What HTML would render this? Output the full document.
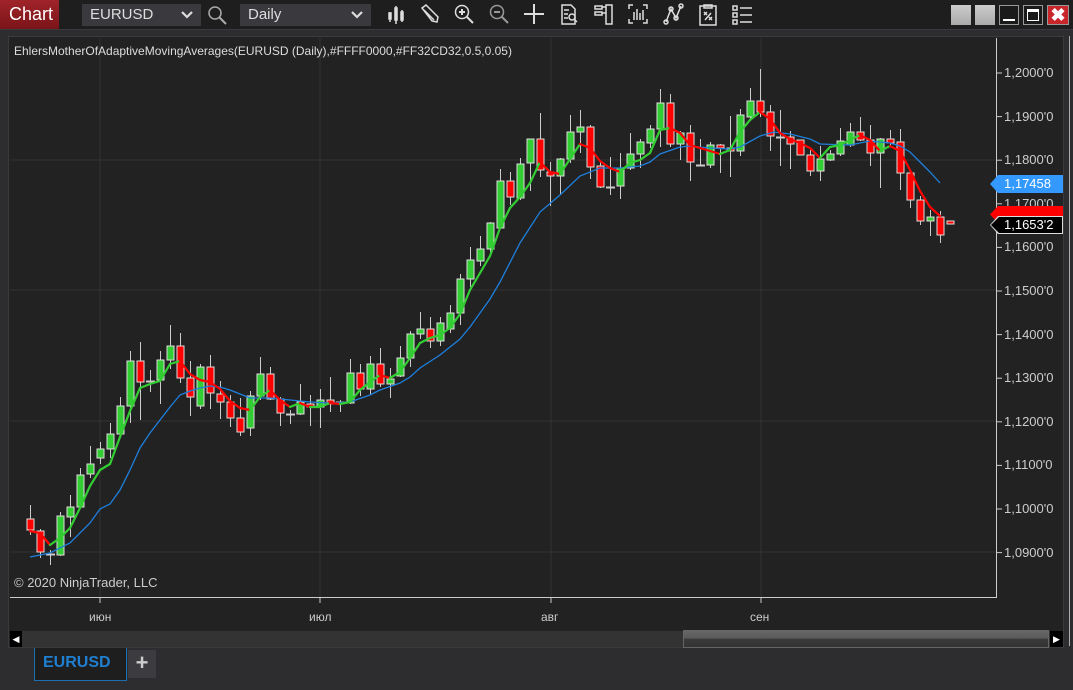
<!DOCTYPE html>
<html><head><meta charset="utf-8">
<style>
*{margin:0;padding:0;box-sizing:border-box}
body{width:1073px;height:690px;background:#2d2d30;font-family:"Liberation Sans",sans-serif;position:relative;overflow:hidden}
.tb{position:absolute;left:0;top:0;width:1073px;height:30px;background:#1e1e1e;border-bottom:1px solid #3a3a3e}
.ct{position:absolute;left:0;top:0;width:59px;height:29px;background:linear-gradient(#a0242a,#7a1418);color:#fff;font-size:18px;line-height:29px;padding-left:9px}
.dd{position:absolute;top:4px;height:22px;background:#3a3a3e;color:#ddd;font-size:15px;line-height:22px;padding-left:8px}
.dd svg{position:absolute;right:8px;top:7px}
.wb{position:absolute;top:5px;width:20px;height:20px}
.lab{position:absolute;color:#ccc;font-size:12px}
</style></head><body>
<div class="tb">
<div class="ct">Chart</div>
<div class="dd" style="left:82px;width:119px">EURUSD<svg width="12" height="8"><path d="M1 1l5 5 5-5" stroke="#ddd" stroke-width="2.2" fill="none"/></svg></div>
<svg style="position:absolute;left:206px;top:4px" width="24" height="22"><circle cx="9" cy="9" r="6" stroke="#aaa" stroke-width="1.5" fill="none"/><path d="M13 13l7 7" stroke="#aaa" stroke-width="2"/></svg>
<div class="dd" style="left:240px;width:131px">Daily<svg width="12" height="8"><path d="M1 1l5 5 5-5" stroke="#ddd" stroke-width="2.2" fill="none"/></svg></div>
<svg style="position:absolute;left:380px;top:0" width="600" height="30" fill="none" stroke="#ddd" stroke-width="1.5">
<g transform="translate(8,4)"><path d="M2 8v10M1 9h2v6H1z M8 2v18M7 4h2v12H7z M14 6v12M13 8h2v8h-2z"/></g>
<g transform="translate(40,4)"><path d="M2 4l4-3 12 12-1 5-5-1z M4 6l10 10"/></g>
<g transform="translate(73,3)"><circle cx="9" cy="9" r="6.5"/><path d="M6 9h6M9 6v6M14 14l6 6" stroke-width="2"/></g>
<g transform="translate(108,3)" stroke="#999"><circle cx="9" cy="9" r="6.5"/><path d="M6 9h6M14 14l6 6" stroke-width="2"/></g>
<g transform="translate(144,4)"><path d="M10 0v20M0 10h20" stroke-width="2"/></g>
<g transform="translate(180,4)"><path d="M2 1h9l4 4v15H2z M4 6h5M4 10h4M4 14h4"/><circle cx="12" cy="13" r="3"/><path d="M14 15l3 3"/></g>
<g transform="translate(214,4)"><path d="M1 2h7v3H1z M1 8h7v3H1z M8 3h4 M8 9h4 M12 1h6v19h-6z"/></g>
<g transform="translate(248,4)"><path d="M1 5V1h4 M15 1h4v4 M1 15v4h4 M15 19h4v-4 M6 8v8M9 5v11M12 9v7M15 6v10"/></g>
<g transform="translate(284,4)"><path d="M2 18l5-13 5 9 5-12"/><circle cx="2" cy="18" r="2"/><circle cx="7" cy="5" r="2"/><circle cx="12" cy="14" r="2"/><circle cx="17" cy="2" r="2"/></g>
<g transform="translate(318,4)"><path d="M2 2h16v19H2z M6 1h8v3H6z M6 8l3 3M9 8l-3 3 M11 13l3 3M14 13l-3 3 M7 16l6-7"/></g>
<g transform="translate(352,5)"><path d="M1 1h4v4H1z M1 8h4v4H1z M1 15h4v4H1z M8 3h12M8 10h12M8 17h12"/></g>
</svg>
<div class="wb" style="left:951px;background:linear-gradient(#ccc,#aaa)"></div>
<div class="wb" style="left:975px;background:linear-gradient(#ccc,#aaa)"></div>
<div class="wb" style="left:999px;background:#1a1a1a;border:1px solid #999"><div style="position:absolute;left:3px;top:13px;width:12px;height:2px;background:#fff"></div></div>
<div class="wb" style="left:1023px;background:#1a1a1a;border:1px solid #999"><div style="position:absolute;left:3px;top:3px;width:12px;height:12px;border:1.5px solid #fff;border-top-width:3px"></div></div>
<div class="wb" style="left:1047px;width:22px;background:#c8262a;border:1px solid #999;color:#fff;font-weight:bold;font-size:18px;line-height:18px;text-align:center">✖</div>
</div>
<div style="position:absolute;left:8px;top:36px;width:1056px;height:612px;background:#222;border:1px solid #3a3a3e"></div>
<div style="position:absolute;left:1069px;top:36px;width:1px;height:610px;background:#aaa"></div>
<svg id="ch" style="position:absolute;left:0;top:0" width="1073" height="690"></svg>
<div class="lab" style="left:14px;top:44px;color:#ddd">EhlersMotherOfAdaptiveMovingAverages(EURUSD (Daily),#FFFF0000,#FF32CD32,0.5,0.05)</div>
<div class="lab" style="left:14px;top:575px;color:#ccc;font-size:13px">© 2020 NinjaTrader, LLC</div>
<div class="lab" style="left:89px;top:610px">июн</div>
<div class="lab" style="left:309px;top:610px">июл</div>
<div class="lab" style="left:541px;top:610px">авг</div>
<div class="lab" style="left:750px;top:610px">сен</div>
<div id="pl"></div>
<div style="position:absolute;left:990px;top:206px;width:73px;height:17px;background:#f00;clip-path:polygon(0 50%,8px 0,100% 0,100% 100%,8px 100%)"></div>
<div style="position:absolute;left:990px;top:175px;width:73px;height:18px;background:#3399ff;clip-path:polygon(0 50%,8px 0,100% 0,100% 100%,8px 100%);color:#fff;font-size:13px;line-height:18px;padding-left:14px">1,17458</div>
<div style="position:absolute;left:990px;top:216px;width:73px;height:18px;background:#ddd;clip-path:polygon(0 50%,8px 0,100% 0,100% 100%,8px 100%)"><div style="position:absolute;left:1px;top:1px;width:71px;height:16px;background:#000;clip-path:polygon(0 50%,8px 0,100% 0,100% 100%,8px 100%);color:#fff;font-size:13px;line-height:16px;padding-left:13px">1,1653'2</div></div>
<div style="position:absolute;left:10px;top:631px;width:1053px;height:16px;background:#333"></div>
<div style="position:absolute;left:10px;top:631px;width:12px;height:16px;background:#000;color:#fff;font-size:9px;line-height:16px;text-align:center">◀</div>
<div style="position:absolute;left:683px;top:630px;width:366px;height:18px;background:linear-gradient(#666 0,#5a5a5a 45%,#3a3a3a 50%,#333 100%);border:1px solid #666"></div>
<div style="position:absolute;left:1050px;top:631px;width:13px;height:16px;background:#000;color:#fff;font-size:9px;line-height:16px;text-align:center">▶</div>
<div style="position:absolute;left:34px;top:648px;width:93px;height:33px;background:#1e1e1e;border:1px solid #1a6fb5;border-top:none;color:#1f7fd0;font-weight:bold;font-size:16px;line-height:30px;padding-left:8px">EURUSD</div>
<div style="position:absolute;left:128px;top:650px;width:28px;height:28px;background:#3c3c40;color:#ccc;font-weight:bold;font-size:22px;line-height:26px;text-align:center">+</div>
<script>
var s='';
// grid
[160,290,421,552].forEach(function(y){s+='<line x1="10" x2="996" y1="'+y+'" y2="'+y+'" stroke="#333" stroke-width="1"/>';});
[100,320,551,761].forEach(function(x){s+='<line x1="'+x+'" x2="'+x+'" y1="38" y2="597" stroke="#333"/><line x1="'+x+'" x2="'+x+'" y1="597" y2="603" stroke="#ccc"/>';});
s+='<line x1="996.5" x2="996.5" y1="38" y2="598" stroke="#ccc"/><line x1="10" x2="997" y1="597.5" y2="597.5" stroke="#ccc"/>';
var pl='';
for(var i=0;i<12;i++){var p=1.2-i*0.01;var y=73+i*43.6;s+='<line x1="997" x2="1002" y1="'+y+'" y2="'+y+'" stroke="#ccc"/>';
pl+='<div class="lab" style="left:1004px;top:'+(y-8)+'px;font-size:13px">'+p.toFixed(4).replace('.',',')+"'0</div>";}
document.getElementById('pl').innerHTML=pl;
// candles: [o,c,h,l] in y px; color G/R
var C=[['R',519,530,505,535],['R',531,552,529,558],['D',554,554,550,565],['G',555,516,512,556],['G',517,507,495,537],['G',507,475,468,508],['G',474,464,446,478],['G',458,449,442,464],['G',449,434,423,458],['G',434,406,397,435],['G',406,361,351,423],['R',361,382,342,420],['D',381,381,370,392],['G',380,360,351,404],['G',360,346,325,369],['R',346,378,333,383],['R',378,397,361,416],['G',406,367,364,409],['R',367,393,355,409],['R',394,402,381,419],['R',402,418,395,427],['R',418,432,398,436],['G',428,396,391,436],['G',396,374,357,400],['R',374,399,367,400],['R',399,413,397,426],['D',414,414,410,424],['G',414,402,384,415],['R',404,407,395,426],['G',407,400,389,428],['R',400,404,377,412],['D',402,402,400,412],['G',403,373,359,404],['R',373,389,364,396],['G',389,364,356,395],['R',364,384,348,387],['G',384,379,368,398],['G',376,358,346,377],['G',358,334,331,367],['G',334,329,312,339],['R',329,341,317,348],['G',341,323,317,346],['G',329,313,305,333],['G',313,279,274,325],['G',279,260,247,287],['G',261,249,236,266],['G',249,223,222,255],['G',228,181,169,228],['R',181,197,172,205],['G',198,164,158,200],['G',163,139,139,191],['R',139,170,113,177],['R',172,176,162,206],['G',176,159,158,195],['G',159,132,115,163],['G',132,127,110,153],['R',127,167,125,179],['R',166,187,162,188],['D',187,187,157,195],['G',186,168,153,199],['G',168,154,133,170],['G',154,142,139,168],['G',143,129,125,148],['G',129,103,89,147],['R',103,144,94,147],['G',144,133,131,160],['R',133,162,125,181],['D',165,165,139,166],['G',165,145,142,168],['R',145,148,144,173],['R',148,151,116,177],['G',151,115,109,156],['G',117,101,88,121],['R',101,112,69,117],['R',112,136,105,151],['D',137,137,110,166],['R',137,144,131,169],['R',140,155,140,155],['R',155,171,150,176],['G',171,159,146,181],['G',160,154,150,161],['G',154,141,128,156],['G',145,132,123,147],['R',132,140,117,141],['R',140,153,125,166],['G',153,139,138,188],['R',139,143,130,147],['R',142,173,129,190],['R',173,200,172,208],['R',200,221,196,225],['G',221,217,210,236],['R',217,235,211,243],['R',221,224,221,224]];
C.forEach(function(c,i){var x=30+i*10;var t=Math.min(c[1],c[2]),b=Math.max(c[1],c[2]);
if(c[3]<c[4])s+='<line x1="'+x+'.5" x2="'+x+'.5" y1="'+c[3]+'" y2="'+c[4]+'" stroke="#ccc"/>';
if(c[0]=='D'){s+='<line x1="'+(x-4)+'" x2="'+(x+5)+'" y1="'+t+'.5" y2="'+t+'.5" stroke="#ccc" stroke-width="2"/>';}
else{var h=Math.max(b-t,2);s+='<rect x="'+(x-3)+'" y="'+t+'" width="7" height="'+h+'" fill="'+(c[0]=='G'?'#32cd32':'#f00')+'" stroke="#ddd" stroke-width="1"/>';}
});
var B=[[30,557],[50,553],[70,543],[90,523],[100,509],[110,504],[120,490],[130,470],[140,448],[150,433],[160,420],[170,407],[180,395],[190,391],[200,388],[210,386],[220,387],[230,390],[240,394],[250,398],[270,398],[290,400],[310,402],[330,403],[350,402],[370,395],[380,390],[400,383],[410,377],[420,368],[440,355],[460,339],[470,327],[490,299],[500,282],[520,243],[540,212],[560,195],[580,176],[600,168],[620,168],[640,166],[650,162],[660,154],[680,147],[690,146],[710,148],[730,149],[740,147],[760,136],[774,132],[790,134],[810,139],[820,144],[850,145],[870,141],[890,143],[900,146],[910,152],[920,162],[930,172],[940,183]];
s+='<polyline fill="none" stroke="#1e7fdc" stroke-width="1.3" points="'+B.join(' ')+'"/>';
var M=[[30,531],[40,533],[50,545],[60,538],[70,528],[80,508],[90,486],[100,470],[110,464],[120,437],[130,411],[140,388],[150,384],[160,381],[170,364],[180,361],[190,374],[200,380],[210,382],[220,389],[230,401],[240,408],[250,410],[260,397],[270,390],[280,400],[290,407],[300,403],[310,407],[320,407],[330,403],[340,404],[350,402],[360,390],[370,382],[380,375],[390,378],[400,372],[410,358],[420,343],[430,338],[440,335],[450,328],[460,314],[470,290],[480,273],[490,256],[500,228],[510,208],[520,197],[530,183],[540,162],[550,172],[560,174],[570,159],[580,144],[590,148],[600,161],[610,168],[620,172],[630,163],[640,160],[650,153],[660,130],[670,128],[680,133],[690,145],[700,148],[710,151],[720,154],[730,150],[740,132],[750,120],[760,112],[770,119],[780,133],[790,139],[800,143],[810,148],[820,158],[830,147],[840,145],[850,140],[860,135],[870,140],[880,151],[890,146],[900,151],[910,170],[920,191],[930,207],[940,216]];
for(var i=1;i<M.length;i++){var a=M[i-1],b=M[i];s+='<line x1="'+a[0]+'" y1="'+a[1]+'" x2="'+b[0]+'" y2="'+b[1]+'" stroke="'+(b[1]>a[1]?'#f00':'#32cd32')+'" stroke-width="2.2" stroke-linecap="round"/>';}
document.getElementById('ch').innerHTML=s;
</script>
</body></html>
